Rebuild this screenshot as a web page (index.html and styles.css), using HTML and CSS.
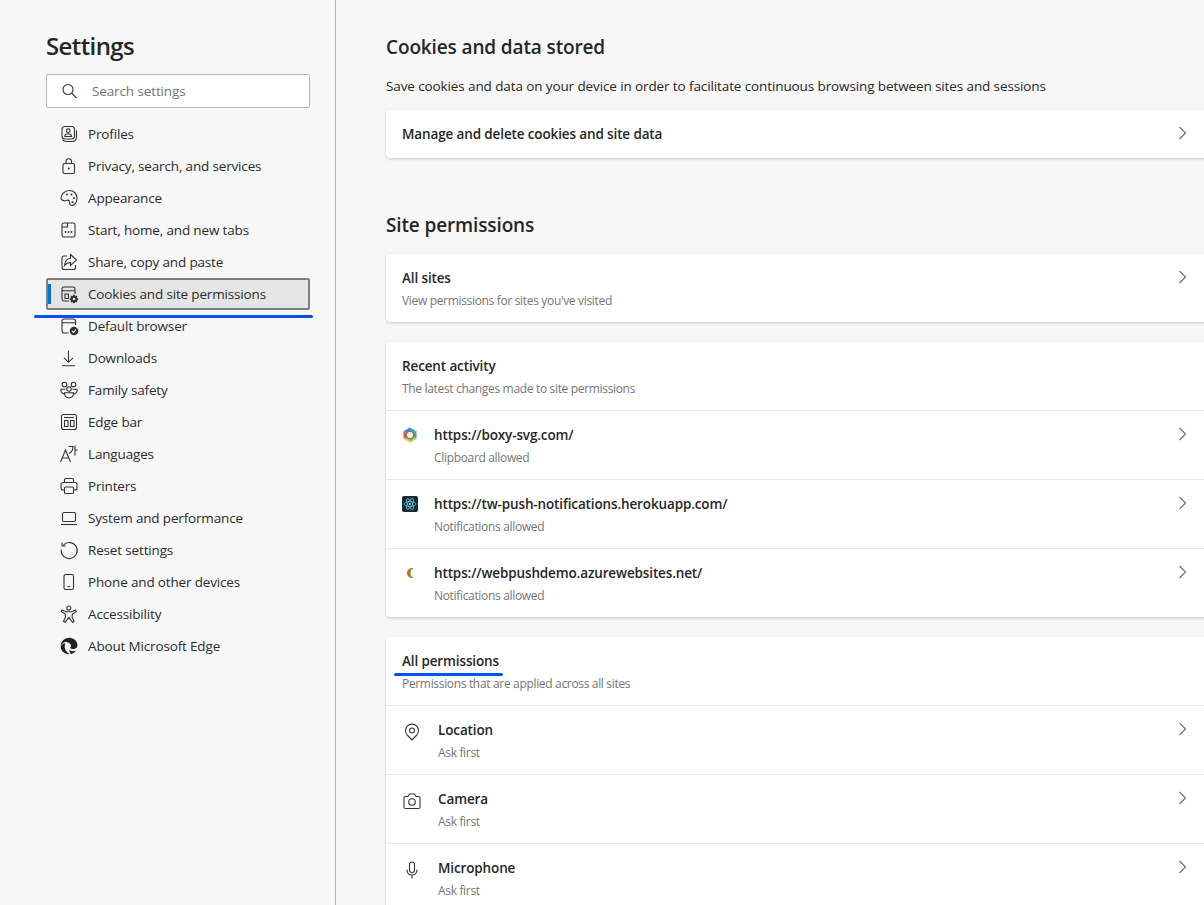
FILE: index.html
```html
<!DOCTYPE html>
<html lang="en">
<head>
    <meta charset="UTF-8">
    <title>Settings</title>
    <link rel="stylesheet" href="styles.css">
</head>
<body>
<div class="page">
    <aside class="sidebar">
        <h1 class="sidebar-title">Settings</h1>
        <div class="search">
            <svg class="icon" viewBox="0 0 20 20"><circle cx="8" cy="8.500" r="5"/><path d="M11.700 12.200L16.500 17"/></svg>
            <span class="search-text">Search settings</span>
        </div>
        <nav class="nav">
            <a class="nav-item"><svg class="icon" viewBox="0 0 20 20"><rect x="3" y="2.500" width="12.500" height="12.500" rx="3"/><circle cx="9.200" cy="6.700" r="1.800"/><path d="M5.800 12.500c0-3.600 6.800-3.600 6.800 0zM3.500 15.500c.8 1.500 2 2 3.500 2h6c2.500 0 4.500-1.500 4.500-4.500V6.500"/></svg>Profiles</a>
            <a class="nav-item"><svg class="icon" viewBox="0 0 20 20"><rect x="4" y="7.500" width="11.500" height="10" rx="1.500"/><path d="M7 7.500V5a2.800 2.800 0 0 1 5.500 0v2.500"/><circle class="dot" cx="9.800" cy="12.500" r="1"/></svg>Privacy, search, and services</a>
            <a class="nav-item"><svg class="icon" viewBox="0 0 20 20"><path d="M2 10c0-3 3-7.500 8.500-7.500 4.500 0 7.500 3.500 7.500 7.500 0 4.500-2.500 7.500-5 7.500-2.500 0-2.500-2-2.500-3.500 0-2.500-2-2-3.500-1.500C5 13 2 12.500 2 10z"/><circle class="dot" cx="8" cy="6.500" r="1"/><circle class="dot" cx="12.500" cy="6.500" r="1"/><circle class="dot" cx="15" cy="10" r="1"/><circle class="dot" cx="13.500" cy="14" r="1"/></svg>Appearance</a>
            <a class="nav-item"><svg class="icon" viewBox="0 0 20 20"><rect x="3" y="3" width="13" height="14" rx="1.800"/><path d="M3 7h5.500V3"/><circle class="dot" cx="6.500" cy="12" r=".9"/><circle class="dot" cx="9.500" cy="12" r=".9"/><circle class="dot" cx="12.500" cy="12" r=".9"/></svg>Start, home, and new tabs</a>
            <a class="nav-item"><svg class="icon" viewBox="0 0 20 20"><path d="M8 4H5a2 2 0 0 0-2 2v9.500a2 2 0 0 0 2 2h9.500a2 2 0 0 0 2-2V13"/><path d="M11.500 2.500L17.500 8l-6 5.500V10.500c-3 0-4.500 1-6 3 .3-4 2.500-7 6-7.300z"/></svg>Share, copy and paste</a>
            <a class="nav-item is-active"><svg class="icon" viewBox="0 0 20 20"><path d="M10 17H4.800A1.800 1.800 0 0 1 3 15.200V4.800A1.800 1.800 0 0 1 4.800 3h9.400A1.800 1.800 0 0 1 16 4.800V10M3 6.800h13M6 10h3.500v4.500H6z"/><path class="dot" d="M14.200 10.800h1.600l.3 1.300 1.200-.5 1.100 1.100-.6 1.200 1.300.4v1.600l-1.300.4.600 1.200-1.100 1.100-1.200-.6-.3 1.300h-1.600l-.4-1.300-1.200.6-1.100-1.100.6-1.200-1.300-.4v-1.600l1.300-.4-.6-1.200 1.100-1.100 1.200.5z"/><circle class="hole" cx="15" cy="15" r="1.300"/></svg>Cookies and site permissions</a>
            <a class="nav-item"><svg class="icon" viewBox="0 0 20 20"><path d="M9.500 17H5a2 2 0 0 1-2-2V5a2 2 0 0 1 2-2h9.500a2 2 0 0 1 2 2v4M3 6.800h13.500"/><circle class="dot" cx="15" cy="15" r="4.300"/><path class="check" d="M13 15l1.500 1.500 2.500-3"/></svg>Default browser</a>
            <a class="nav-item"><svg class="icon" viewBox="0 0 20 20"><path d="M9.500 2.500V14M5 9.800l4.500 4.500 4.500-4.500M3 17.800h13"/></svg>Downloads</a>
            <a class="nav-item"><svg class="icon" viewBox="0 0 20 20"><circle cx="5.500" cy="4.500" r="2.300"/><circle cx="14.500" cy="4.500" r="2.300"/><circle cx="10" cy="9" r="2.200"/><path d="M6.500 9.200H2c-.8 3 1.500 4.500 3.500 5M13.500 9.200H18c.8 3-1.500 4.500-3.500 5M5.500 12.800h9c.3 3.500-2 5.200-4.500 5.200s-4.800-1.700-4.500-5.200z"/></svg>Family safety</a>
            <a class="nav-item"><svg class="icon" viewBox="0 0 20 20"><rect x="2.500" y="2.500" width="15" height="15" rx="2"/><path d="M5 5.500h10M5.500 8.500h3.500v6H5.500zM11.500 8.500H15v6h-3.500z"/></svg>Edge bar</a>
            <a class="nav-item"><svg class="icon" viewBox="0 0 20 20"><path d="M1.500 18L6.500 6l5 12M3.500 14h6.500M9.500 2.500h4.500c0 3-1 5.500-4 7M16 1.500v10M16 6h2.500"/></svg>Languages</a>
            <a class="nav-item"><svg class="icon" viewBox="0 0 20 20"><path d="M5.500 6.500V4a1.500 1.500 0 0 1 1.500-1.500h6A1.500 1.500 0 0 1 14.500 4v2.500M5.500 14H4a2 2 0 0 1-2-2V8.500a2 2 0 0 1 2-2h12a2 2 0 0 1 2 2V12a2 2 0 0 1-2 2h-1.500"/><rect x="5.500" y="11" width="9" height="6.500" rx="1"/></svg>Printers</a>
            <a class="nav-item"><svg class="icon" viewBox="0 0 20 20"><rect x="3.500" y="4.500" width="13" height="9" rx="1.500"/><path d="M2 16.500h16"/></svg>System and performance</a>
            <a class="nav-item"><svg class="icon" viewBox="0 0 20 20"><path d="M4.500 5A8 8 0 1 1 2.300 9.500M3 2.500V6h3.500"/></svg>Reset settings</a>
            <a class="nav-item"><svg class="icon" viewBox="0 0 20 20"><rect x="5" y="2.500" width="9.500" height="15" rx="1.800"/><path d="M8.500 14.500h2.500"/></svg>Phone and other devices</a>
            <a class="nav-item"><svg class="icon" viewBox="0 0 20 20"><circle cx="9.800" cy="4" r="2"/><path d="M3 6l4 1.800h5.500L16.500 6l.8 1.600-4 2.400-.2 3 2 4.500-1.600.8-3.700-5-3.700 5-1.600-.8 2-4.500-.2-3-4-2.400z"/></svg>Accessibility</a>
            <a class="nav-item"><svg class="icon" viewBox="0 0 20 20"><path class="solid" d="M10 1.800c5 0 8.500 3.700 8.500 7.500 0 2.500-2 3.800-4.200 3.800-1.500 0-2.800-.5-3.300-1.300 1.200-.8 1.500-2.300.3-3.800C9.800 6.200 7.300 5.500 5 6.500 3.500 7.200 2.200 8.500 1.700 10 1.700 5.500 5.500 1.800 10 1.800z"/><path class="solid" d="M1.700 10.500C2 8.500 4.500 7 6.500 7.500c-1.500 2.500-1 6 1.500 8.500 1 1 1.800 1.500 2.800 2-.3.100-.6.200-.8.200-4.500 0-8.500-3.500-8.300-7.700z"/><path class="solid" d="M12 18c2-.3 3.800-1.500 5-3.500-1.500.8-3.500.8-5 .3-.8-.3-1.500-.7-1.800-1 .2 1.800.8 3.200 1.800 4.200z"/></svg>About Microsoft Edge</a>
        </nav>
    </aside>

    <main class="content">
        <h2 class="section-title">Cookies and data stored</h2>
        <p class="section-desc">Save cookies and data on your device in order to facilitate continuous browsing between sites and sessions</p>
        <section class="card">
            <div class="row row-single">
                <div class="row-title row-body">Manage and delete cookies and site data</div>
                <svg class="chevron" viewBox="0 0 10 14"><path d="M1.500 1l6 6-6 6"/></svg>
            </div>
        </section>

        <h2 class="section-title section-title-second">Site permissions</h2>
        <section class="card">
            <div class="row">
                <div class="row-body">
                    <div class="row-title">All sites</div>
                    <div class="row-sub">View permissions for sites you've visited</div>
                </div>
                <svg class="chevron" viewBox="0 0 10 14"><path d="M1.500 1l6 6-6 6"/></svg>
            </div>
        </section>

        <section class="card">
            <div class="row">
                <div class="row-body">
                    <div class="row-title">Recent activity</div>
                    <div class="row-sub">The latest changes made to site permissions</div>
                </div>
            </div>
            <div class="row">
                <svg class="favicon" viewBox="0 0 16 16">
                    <path fill="#3f7fd8" d="M8 0.500L1.500 4.200 8 8z"/>
                    <path fill="#4aa5c8" d="M8 0.500l6.500 3.700L8 8z"/>
                    <path fill="#45b36b" d="M14.500 4.200v7.600L8 8z"/>
                    <path fill="#b7c93c" d="M14.500 11.800L8 15.500 8 8z"/>
                    <path fill="#f2c230" d="M8 15.500l-6.500-3.700L8 8z"/>
                    <path fill="#e5583c" d="M1.500 11.800V4.200L8 8z"/>
                    <circle cx="8" cy="8" r="4.500" fill="#777"/>
                    <circle cx="8" cy="8" r="3" fill="#f2f2f2"/>
                </svg>
                <div class="row-body">
                    <div class="row-title">https://boxy-svg.com/</div>
                    <div class="row-sub">Clipboard allowed</div>
                </div>
                <svg class="chevron" viewBox="0 0 10 14"><path d="M1.500 1l6 6-6 6"/></svg>
            </div>
            <div class="row">
                <svg class="favicon" viewBox="0 0 16 16">
                    <rect width="16" height="16" rx="2" fill="#1d2730"/>
                    <g fill="none" stroke="#5cc3d8" stroke-width=".8">
                        <ellipse cx="8" cy="8" rx="6" ry="2.400"/>
                        <ellipse cx="8" cy="8" rx="6" ry="2.400" transform="rotate(60 8 8)"/>
                        <ellipse cx="8" cy="8" rx="6" ry="2.400" transform="rotate(120 8 8)"/>
                    </g>
                    <circle cx="8" cy="8" r="1.200" fill="#5cc3d8"/>
                </svg>
                <div class="row-body">
                    <div class="row-title">https://tw-push-notifications.herokuapp.com/</div>
                    <div class="row-sub">Notifications allowed</div>
                </div>
                <svg class="chevron" viewBox="0 0 10 14"><path d="M1.500 1l6 6-6 6"/></svg>
            </div>
            <div class="row">
                <svg class="favicon" viewBox="0 0 16 16"><path fill="#a67c22" d="M10.500 3C7.500 3 5 5 5 8s2.500 5 5.500 5c.5 0 1-.1 1.300-.2C9.500 12 8.500 10.200 8.500 8s1-4 3.300-4.800C11.500 3.100 11 3 10.500 3z"/></svg>
                <div class="row-body">
                    <div class="row-title">https://webpushdemo.azurewebsites.net/</div>
                    <div class="row-sub">Notifications allowed</div>
                </div>
                <svg class="chevron" viewBox="0 0 10 14"><path d="M1.500 1l6 6-6 6"/></svg>
            </div>
        </section>

        <section class="card">
            <div class="row">
                <div class="row-body">
                    <div class="row-title marked">All permissions</div>
                    <div class="row-sub">Permissions that are applied across all sites</div>
                </div>
            </div>
            <div class="row">
                <svg class="icon perm-icon" viewBox="0 0 20 20"><path d="M10 18l-4.800-5A6.500 6.500 0 1 1 14.800 13z"/><circle cx="10" cy="8.500" r="2.500"/></svg>
                <div class="row-body">
                    <div class="row-title">Location</div>
                    <div class="row-sub">Ask first</div>
                </div>
                <svg class="chevron" viewBox="0 0 10 14"><path d="M1.500 1l6 6-6 6"/></svg>
            </div>
            <div class="row">
                <svg class="icon perm-icon" viewBox="0 0 20 20"><path d="M3.500 5.500H6L7.500 3h5L14 5.500h2.500a1.500 1.500 0 0 1 1.500 1.500v9a1.500 1.500 0 0 1-1.500 1.500h-13A1.500 1.500 0 0 1 2 16V7a1.500 1.500 0 0 1 1.500-1.500z"/><circle cx="10" cy="11" r="3.300"/></svg>
                <div class="row-body">
                    <div class="row-title">Camera</div>
                    <div class="row-sub">Ask first</div>
                </div>
                <svg class="chevron" viewBox="0 0 10 14"><path d="M1.500 1l6 6-6 6"/></svg>
            </div>
            <div class="row">
                <svg class="icon perm-icon" viewBox="0 0 20 20"><rect x="7.500" y="2" width="5" height="10.500" rx="2.500"/><path d="M5 9.500c0 3.500 2.200 5.500 5 5.500s5-2 5-5.500M10 15v3.500"/></svg>
                <div class="row-body">
                    <div class="row-title">Microphone</div>
                    <div class="row-sub">Ask first</div>
                </div>
                <svg class="chevron" viewBox="0 0 10 14"><path d="M1.500 1l6 6-6 6"/></svg>
            </div>
        </section>
    </main>
</div>
</body>
</html>
```

FILE: styles.css
```css
html, body {
    margin: 0;
    padding: 0;
    height: 905px;
    overflow: hidden;
}
body {
    font-family: "Open Sans", "Noto Sans", Arial, sans-serif;
    font-size: 14px;
    color: #262626;
    background-color: #f7f7f7;
}
.page {
    display: flex;
    height: 905px;
}
.sidebar {
    width: 264px;
    flex: none;
    padding: 0 25px 0 46px;
    border-right: 1px solid #b4b4b4;
}
.sidebar-title {
    margin: 0;
    padding-top: 29px;
    height: 45px;
    font-size: 24px;
    line-height: 34px;
    font-weight: 600;
    letter-spacing: -0.6px;
}
.search {
    display: flex;
    align-items: center;
    height: 32px;
    padding-left: 13px;
    background-color: #fff;
    border: 1px solid #b8b8b8;
    border-radius: 2px;
}
.search-text {
    margin-left: 12px;
    color: #767676;
    font-size: 13.5px;
    letter-spacing: -0.12px;
}
.icon {
    width: 20px;
    height: 20px;
    flex: none;
    fill: none;
    stroke: #333;
    stroke-width: 1.1;
}
.icon .dot {
    fill: #333;
    stroke: none;
}
.icon .hole {
    fill: #e5e5e5;
    stroke: none;
}
.icon .check {
    stroke: #fff;
}
.icon .solid {
    fill: #222;
    stroke: none;
}
.nav {
    margin-top: 10px;
}
.nav-item {
    position: relative;
    display: flex;
    align-items: center;
    gap: 9px;
    height: 32px;
    padding-left: 13px;
    font-size: 13.5px;
    letter-spacing: -0.16px;
    box-sizing: border-box;
    color: #2b2b2b;
}
.nav-item.is-active {
    background-color: #e5e5e5;
    border: 2px solid #808080;
    border-radius: 2px;
    padding-left: 11px;
}
.nav-item.is-active::before {
    content: "";
    position: absolute;
    left: 0;
    top: 4px;
    width: 3px;
    height: 20px;
    background-color: #0a6fd6;
}
.nav-item.is-active::after {
    content: "";
    position: absolute;
    left: -14px;
    right: -5px;
    top: 35px;
    height: 3px;
    border-radius: 2px;
    background-color: #0052f5;
}
.content {
    flex: 1;
    min-width: 0;
    padding-left: 50px;
}
.section-title {
    margin: 0;
    padding-top: 33px;
    font-size: 19px;
    line-height: 28px;
    font-weight: 600;
    letter-spacing: -0.13px;
}
.section-title-second {
    margin-bottom: 15px;
}
.section-desc {
    margin: 15px 0 14px;
    line-height: 20px;
    font-size: 13.5px;
    letter-spacing: -0.11px;
}
.card {
    width: 830px;
    margin-bottom: 20px;
    background-color: #fff;
    border-radius: 4px;
    box-shadow: 0 1px 3px rgba(0, 0, 0, 0.2);
}
.row {
    display: flex;
    align-items: flex-start;
    padding: 14px 28px 13px 16px;
    border-top: 1px solid #e6e6e6;
}
.row:first-child {
    border-top: none;
}
.row-single {
    padding-bottom: 14px;
}
.row-body {
    flex: 1;
    min-width: 0;
}
.row-title {
    line-height: 20px;
    font-size: 13.5px;
    font-weight: 600;
    letter-spacing: -0.13px;
}
.marked {
    position: relative;
}
.marked::after {
    content: "";
    position: absolute;
    left: -8px;
    width: 109px;
    top: 22px;
    height: 3px;
    border-radius: 2px;
    background-color: #0052f5;
}
.row-sub {
    margin-top: 5px;
    line-height: 16px;
    font-size: 12px;
    color: #767676;
    letter-spacing: -0.33px;
}
.favicon {
    width: 16px;
    height: 16px;
    flex: none;
    margin: 2px 16px 0 0;
}
.perm-icon {
    margin: 2px 16px 0 0;
    width: 20px;
    height: 20px;
}
.chevron {
    width: 10px;
    height: 14px;
    flex: none;
    margin: 2px 0 0 0;
    fill: none;
    stroke: #767676;
    stroke-width: 1.3;
}
```
